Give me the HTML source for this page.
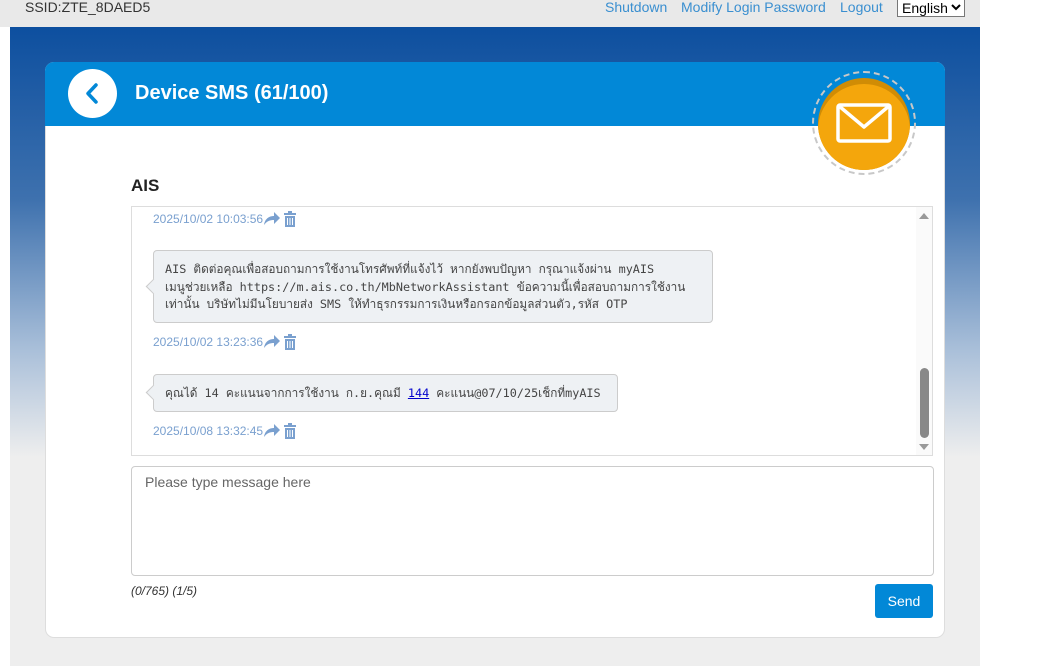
<!DOCTYPE html>
<html><head><meta charset="utf-8"><style>
*{box-sizing:border-box;margin:0;padding:0}
body{width:1058px;height:666px;background:#fff;font-family:"Liberation Sans",sans-serif;position:relative;overflow:hidden}
#wrap{position:absolute;left:10px;top:0;width:970px;height:666px;background:#eeeeee}
#top{position:absolute;left:0;top:0;width:980px;height:27px;background:#e9e9e9;font-size:14px}
#grad{position:absolute;left:10px;top:27px;width:970px;height:430px;background:linear-gradient(#0d4f9f 0%,#3e71ae 40%,#a9bfd9 75%,#eeeeee 100%)}
.ssid{position:absolute;left:25px;top:-1px;color:#333}
.lk{position:absolute;top:-1px;color:#3a8fd0}
select{position:absolute;left:897px;top:-2px;width:68px;height:19px;font-size:14px;font-family:"Liberation Sans",sans-serif;border:1px solid #777;background:#fff}
#card{position:absolute;left:45px;top:62px;width:900px;height:576px;background:#fff;border-radius:9px;border:1px solid #ddd;overflow:visible}
#hdr{position:absolute;left:-1px;top:-1px;width:900px;height:64px;background:#0288d7;border-radius:9px 9px 0 0}
#back{position:absolute;left:23px;top:7px;width:49px;height:49px;border-radius:50%;background:#fff}
#title{position:absolute;left:90px;top:20px;color:#fff;font-weight:bold;font-size:20px}
#ring{position:absolute;left:766px;top:8px;width:104px;height:104px;border-radius:50%;border:2px dashed #c8c8c8;background:transparent}
#env{position:absolute;left:772px;top:15px;width:92px;height:92px;border-radius:50%;background:#d08c05;overflow:hidden}
#ais{position:absolute;left:131px;top:176px;font-weight:bold;font-size:17px;color:#222}
#list{position:absolute;left:131px;top:206px;width:802px;height:250px;border:1px solid #ddd;overflow:hidden}
.ts{position:absolute;left:21px;font-size:12px;color:#7aa0cf;display:flex;align-items:center}
.bub{position:absolute;left:21px;background:#eef1f4;border:1px solid #ccc;border-radius:4px;font-family:"DejaVu Sans Mono","DejaVu Sans",monospace;font-size:11.8px;color:#444;padding:0 11px;line-height:17.5px;white-space:nowrap}
.bub:before{content:"";position:absolute;left:-6px;top:50%;margin-top:-6px;width:10px;height:10px;background:#eef1f4;border-left:1px solid #ccc;border-bottom:1px solid #ccc;transform:rotate(45deg)}
#sb{position:absolute;right:0;top:0;width:16px;height:248px;background:#fafafa}
textarea{position:absolute;left:131px;top:466px;width:803px;height:110px;border:1px solid #ccc;border-radius:4px;padding:7px 13px;font-size:14px;font-family:"Liberation Sans",sans-serif;resize:none}
textarea::placeholder{color:#666}
#cnt{position:absolute;left:131px;top:584px;font-size:12px;font-style:italic;color:#333}
#send{position:absolute;left:875px;top:584px;width:58px;height:34px;background:#0288d7;color:#fff;border-radius:3px;font-size:14px;text-align:center;line-height:34px}
</style></head><body>
<div id="wrap"></div>
<div id="grad"></div>
<div id="top">
<span class="ssid">SSID:ZTE_8DAED5</span>
<span class="lk" style="left:605px">Shutdown</span>
<span class="lk" style="left:681px">Modify Login Password</span>
<span class="lk" style="left:840px">Logout</span>
<select><option>English</option></select>
</div>
<div id="card">
<div id="hdr">
<div id="back"><svg width="49" height="49"><path d="M28 16 L20 24.5 L28 33" stroke="#0288d7" stroke-width="3.5" fill="none" stroke-linecap="round" stroke-linejoin="round"/></svg></div>
<div id="title">Device SMS (61/100)</div>
</div>
<div id="ring"></div>
<div id="env"><div style="position:absolute;left:0;top:6px;width:92px;height:92px;border-radius:50%;background:#f4a60c"></div>
<svg width="92" height="92" style="position:absolute;left:0;top:0"><rect x="20" y="27" width="52" height="36" rx="2" fill="none" stroke="#fff" stroke-width="3.5"/><path d="M21 28 L46 49 L71 28" fill="none" stroke="#fff" stroke-width="3.5" stroke-linejoin="round"/></svg></div>
</div>
<div id="ais">AIS</div>
<div id="list">
<div class="ts" style="top:4px">2025/10/02 10:03:56<svg width="18" height="14" viewBox="0 0 18 14"><path d="M1 13 C2 6 7 4 11 4 L11 0 L17 6 L11 12 L11 8 C7 8 4 9 1 13Z" fill="#7aa0cf"/></svg><svg width="14" height="16" viewBox="0 0 14 16" style="margin-left:2px"><rect x="1" y="2" width="12" height="2" fill="#7aa0cf"/><rect x="5" y="0" width="4" height="2" fill="#7aa0cf"/><path d="M2 5 H12 V16 H2Z M4 7 V14 H5 V7Z M6.5 7 V14 H7.5 V7Z M9 7 V14 H10 V7Z" fill="#7aa0cf" fill-rule="evenodd"/></svg></div>
<div class="bub" style="top:43px;width:560px;height:73px;padding-top:10px">AIS ติดต่อคุณเพื่อสอบถามการใช้งานโทรศัพท์ที่แจ้งไว้ หากยังพบปัญหา กรุณาแจ้งผ่าน myAIS<br>เมนูช่วยเหลือ https://m.ais.co.th/MbNetworkAssistant ข้อความนี้เพื่อสอบถามการใช้งาน<br>เท่านั้น บริษัทไม่มีนโยบายส่ง SMS ให้ทำธุรกรรมการเงินหรือกรอกข้อมูลส่วนตัว,รหัส OTP</div>
<div class="ts" style="top:127px">2025/10/02 13:23:36<svg width="18" height="14" viewBox="0 0 18 14"><path d="M1 13 C2 6 7 4 11 4 L11 0 L17 6 L11 12 L11 8 C7 8 4 9 1 13Z" fill="#7aa0cf"/></svg><svg width="14" height="16" viewBox="0 0 14 16" style="margin-left:2px"><rect x="1" y="2" width="12" height="2" fill="#7aa0cf"/><rect x="5" y="0" width="4" height="2" fill="#7aa0cf"/><path d="M2 5 H12 V16 H2Z M4 7 V14 H5 V7Z M6.5 7 V14 H7.5 V7Z M9 7 V14 H10 V7Z" fill="#7aa0cf" fill-rule="evenodd"/></svg></div>
<div class="bub" style="top:167px;width:465px;height:38px;line-height:36px">คุณได้ 14 คะแนนจากการใช้งาน ก.ย.คุณมี <u style="color:#00c">144</u> คะแนน@07/10/25เช็กที่myAIS</div>
<div class="ts" style="top:216px">2025/10/08 13:32:45<svg width="18" height="14" viewBox="0 0 18 14"><path d="M1 13 C2 6 7 4 11 4 L11 0 L17 6 L11 12 L11 8 C7 8 4 9 1 13Z" fill="#7aa0cf"/></svg><svg width="14" height="16" viewBox="0 0 14 16" style="margin-left:2px"><rect x="1" y="2" width="12" height="2" fill="#7aa0cf"/><rect x="5" y="0" width="4" height="2" fill="#7aa0cf"/><path d="M2 5 H12 V16 H2Z M4 7 V14 H5 V7Z M6.5 7 V14 H7.5 V7Z M9 7 V14 H10 V7Z" fill="#7aa0cf" fill-rule="evenodd"/></svg></div>
<div id="sb"><svg width="16" height="248"><path d="M3 12 L8 6 L13 12Z" fill="#999"/><path d="M3 237 L8 243 L13 237Z" fill="#999"/><rect x="4" y="161" width="9" height="70" rx="4.5" fill="#888"/></svg></div>
</div>
<textarea placeholder="Please type message here"></textarea>
<div id="cnt">(0/765) (1/5)</div>
<div id="send">Send</div>
</body></html>
